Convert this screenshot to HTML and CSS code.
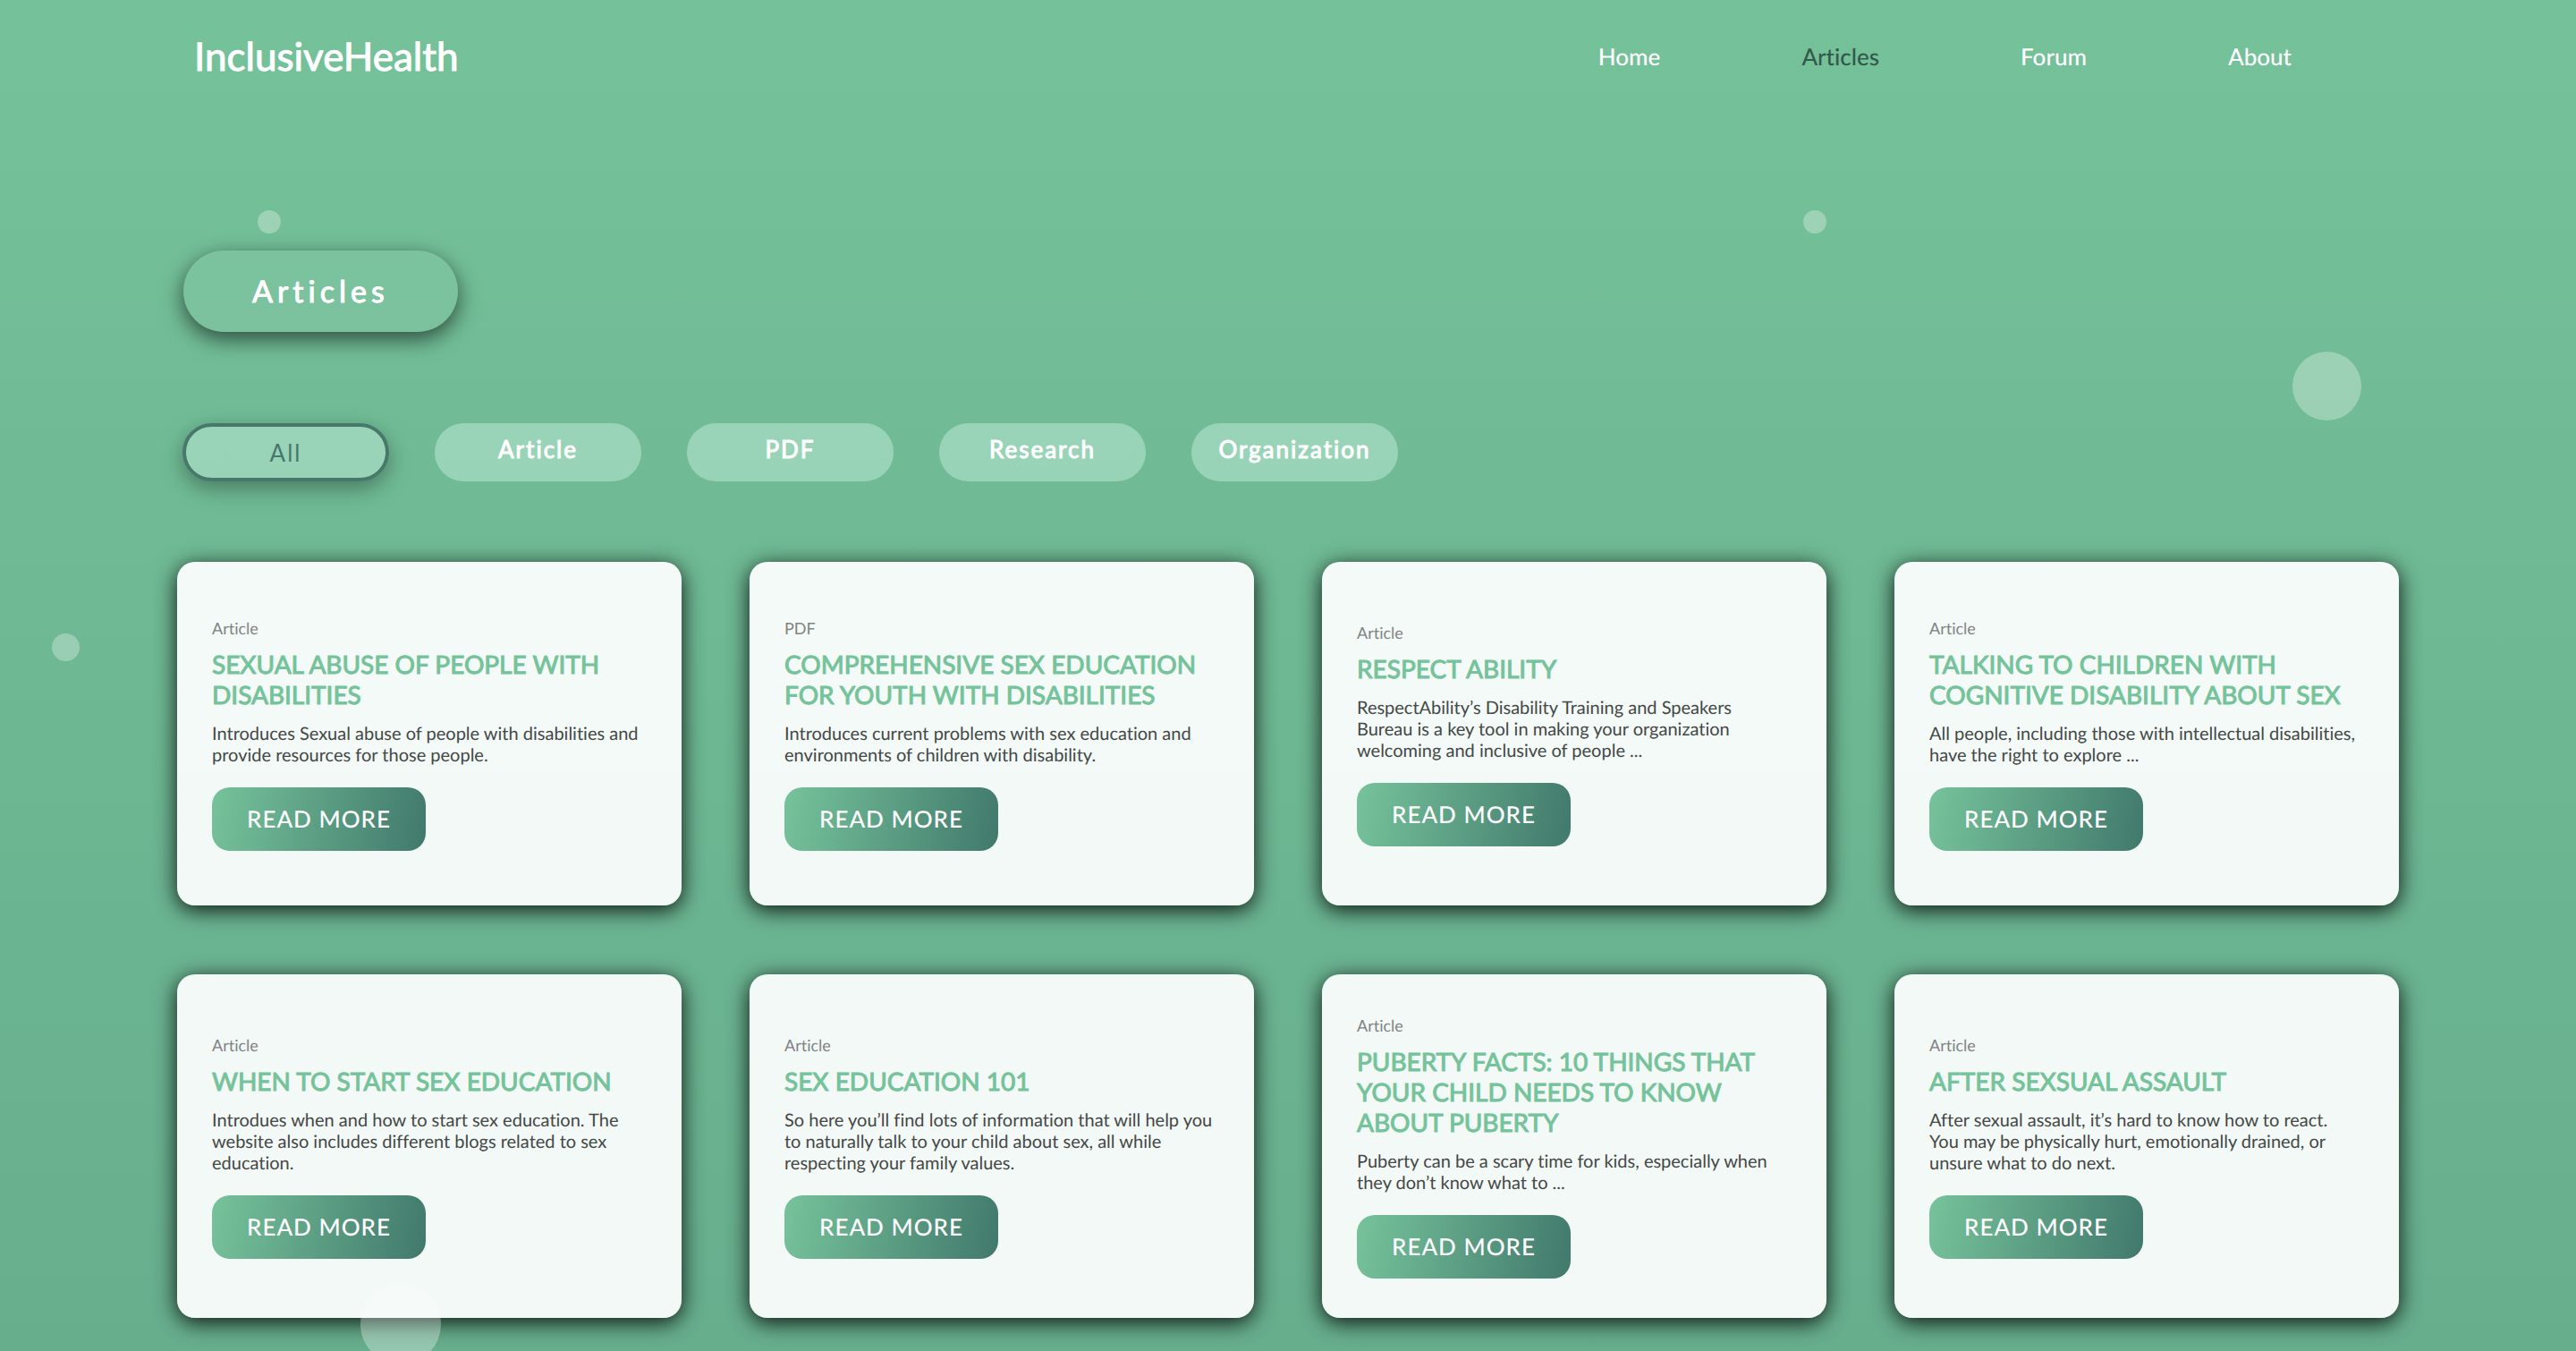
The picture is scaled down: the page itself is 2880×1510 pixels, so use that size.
FILE: index.html
```html
<!DOCTYPE html>
<html lang="en">
<head>
<meta charset="utf-8">
<meta name="viewport" content="width=device-width, initial-scale=1">
<title>InclusiveHealth – Articles</title>
<link rel="stylesheet" href="styles.css">
</head>
<body>
<div class="page">
  <header class="header">
    <a class="logo" href="#">InclusiveHealth</a>
    <nav class="nav">
      <a href="#">Home</a>
      <a class="current" href="#" aria-current="page">Articles</a>
      <a href="#">Forum</a>
      <a href="#">About</a>
    </nav>
  </header>
  <main class="main">
    <h1 class="heading">Articles</h1>
    <div class="filters">
      <button class="filter active" type="button">All</button>
      <button class="filter" type="button">Article</button>
      <button class="filter" type="button">PDF</button>
      <button class="filter" type="button">Research</button>
      <button class="filter" type="button">Organization</button>
    </div>
    <div class="cards">
      <article class="card">
        <p class="tag">Article</p>
        <h2 class="title">Sexual abuse of people with disabilities</h2>
        <p class="text">Introduces Sexual abuse of people with disabilities and provide resources for those people.</p>
        <a class="more" href="#">Read more</a>
      </article>
      <article class="card">
        <p class="tag">PDF</p>
        <h2 class="title">Comprehensive sex education for youth with disabilities</h2>
        <p class="text">Introduces current problems with sex education and environments of children with disability.</p>
        <a class="more" href="#">Read more</a>
      </article>
      <article class="card">
        <p class="tag">Article</p>
        <h2 class="title">Respect Ability</h2>
        <p class="text">RespectAbility’s Disability Training and Speakers Bureau is a key tool in making your organization welcoming and inclusive of people ...</p>
        <a class="more" href="#">Read more</a>
      </article>
      <article class="card">
        <p class="tag">Article</p>
        <h2 class="title">Talking to children with cognitive disability about sex</h2>
        <p class="text">All people, including those with intellectual disabilities, have the right to explore ...</p>
        <a class="more" href="#">Read more</a>
      </article>
      <article class="card">
        <p class="tag">Article</p>
        <h2 class="title">When to start sex education</h2>
        <p class="text">Introdues when and how to start sex education. The website also includes different blogs related to sex education.</p>
        <a class="more" href="#">Read more</a>
      </article>
      <article class="card">
        <p class="tag">Article</p>
        <h2 class="title">Sex Education 101</h2>
        <p class="text">So here you’ll find lots of information that will help you to naturally talk to your child about sex, all while respecting your family values.</p>
        <a class="more" href="#">Read more</a>
      </article>
      <article class="card">
        <p class="tag">Article</p>
        <h2 class="title">Puberty facts: 10 things that your child needs to know about puberty</h2>
        <p class="text">Puberty can be a scary time for kids, especially when they don’t know what to ...</p>
        <a class="more" href="#">Read more</a>
      </article>
      <article class="card">
        <p class="tag">Article</p>
        <h2 class="title">After sexsual assault</h2>
        <p class="text">After sexual assault, it’s hard to know how to react.<br>You may be physically hurt, emotionally drained, or unsure what to do next.</p>
        <a class="more" href="#">Read more</a>
      </article>
    </div>
  </main>
  <div class="bubbles" aria-hidden="true">
    <span class="bubble bubble-a"></span>
    <span class="bubble bubble-b"></span>
    <span class="bubble bubble-c"></span>
    <span class="bubble bubble-d"></span>
    <span class="bubble bubble-e"></span>
  </div>
</div>
</body>
</html>
```
FILE: styles.css
```css
* {
  box-sizing: border-box;
  margin: 0;
  padding: 0;
}

body {
  font-family: Lato, "Liberation Sans", sans-serif;
  font-variant-ligatures: none;
  text-rendering: geometricPrecision;
  color: #fff;
}

a {
  color: inherit;
  text-decoration: none;
}

.page {
  position: relative;
  min-height: 100vh;
  overflow: hidden;
  background: linear-gradient(#75c29a, #67ae8d);
}

.header {
  display: flex;
  justify-content: space-between;
  align-items: center;
  padding: 35px 318px 37px 217px;
}

.logo {
  font-size: 44px;
  line-height: 56px;
  -webkit-text-stroke: 1px currentColor;
}

.nav {
  display: flex;
  gap: 158px;
  font-size: 26px;
  font-weight: 500;
  line-height: 32px;
}

.nav .current {
  color: #33594d;
}

.main {
  padding: 152px 198px 37px;
}

.heading {
  width: fit-content;
  margin-left: 7px;
  padding: 24px 77px;
  border-radius: 50px;
  background: rgba(255, 255, 255, 0.07);
  box-shadow: 0 8px 24px rgba(0, 0, 0, 0.6);
  font-size: 34px;
  font-weight: normal;
  line-height: 43px;
  letter-spacing: 5px;
  -webkit-text-stroke: 1px currentColor;
}

.filters {
  display: flex;
  gap: 51px;
  margin: 102px 0 90px 6px;
}

.filter {
  width: 231px;
  height: 65px;
  padding-bottom: 8px;
  border: 0;
  border-radius: 40px;
  background: rgba(214, 247, 235, 0.4);
  color: #fff;
  font: 26px/32px Lato, "Liberation Sans", sans-serif;
  letter-spacing: 2px;
  -webkit-text-stroke: 1px currentColor;
}

.filter.active {
  padding: 0;
  border: 4px solid #48776c;
  box-shadow: 0 8px 24px rgba(0, 0, 0, 0.35);
  color: #48776c;
  -webkit-text-stroke: 0;
}

.cards {
  display: grid;
  grid-template-columns: repeat(4, 1fr);
  gap: 77px 76px;
}

.card {
  display: flex;
  flex-direction: column;
  justify-content: center;
  align-items: flex-start;
  min-height: 384px;
  padding: 38px 39px 36px;
  border-radius: 20px;
  background: rgba(255, 255, 255, 0.92);
  box-shadow: 0 5px 24px rgba(0, 0, 0, 0.9);
}

.tag {
  color: #808484;
  font-size: 18px;
  line-height: 22px;
}

.title {
  margin-top: 12px;
  color: #74c39a;
  font-size: 28px;
  font-weight: normal;
  line-height: 34px;
  text-transform: uppercase;
  -webkit-text-stroke: 1px currentColor;
}

.text {
  margin-top: 15px;
  color: #444847;
  font-size: 20px;
  line-height: 24px;
}

.more {
  margin-top: 24px;
  padding: 20px 39px;
  border-radius: 20px;
  background: linear-gradient(100deg, #76c39b, #41796c);
  font-size: 26px;
  font-weight: 500;
  line-height: 31px;
  letter-spacing: 1px;
  text-transform: uppercase;
}

/* Decorative bubbles float over the whole page. */
.bubbles {
  position: absolute;
  inset: 0;
  pointer-events: none;
}

.bubble {
  position: absolute;
  width: 26px;
  height: 26px;
  border-radius: 50%;
  background: rgba(255, 255, 255, 0.3);
}

.bubble-a {
  top: 235px;
  left: 10%;
}

.bubble-b {
  top: 235px;
  left: 70%;
}

.bubble-c {
  top: 393px;
  left: 89%;
  width: 77px;
  height: 77px;
}

.bubble-d {
  top: 708px;
  left: 2%;
  width: 31px;
  height: 31px;
}

.bubble-e {
  top: 95%;
  left: 14%;
  width: 90px;
  height: 90px;
}
```
